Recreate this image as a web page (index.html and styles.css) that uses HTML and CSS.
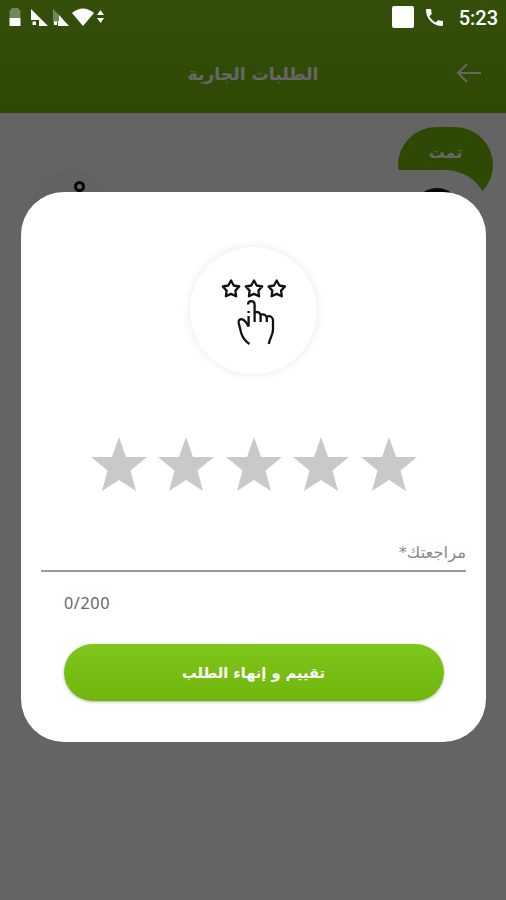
FILE: index.html
```
<!DOCTYPE html>
<html lang="ar" dir="rtl">
<head>
<meta charset="utf-8">
<title>الطلبات الجارية</title>
<meta name="viewport" content="width=device-width, initial-scale=1">
<link rel="stylesheet" href="styles.css">
</head>
<body>
<div class="screen">

	<header class="appbar">
		<svg class="back" width="26" height="22" viewBox="0 0 26 22"><path d="M25 11H2M11 2L2 11l9 9"/></svg>
		<h1>الطلبات الجارية</h1>
	</header>

	<main class="orders">
		<div class="tag">تمت</div>
		<div class="order">
			<span class="avatar"></span>
			<span class="pin"><i></i></span>
		</div>
	</main>

	<div class="overlay">
		<form class="modal" onsubmit="return false;">
			<div class="badge">
				<svg width="66" height="68" viewBox="0 0 66 68">
					<g class="ministars">
						<path id="mini" d="M10 2.5l2.7 5 5.5 1-3.8 4.1.7 5.700-5.100-2.400-5.100 2.400.7-5.700-3.800-4.100 5.500-1z"/>
						<use href="#mini" x="23"/>
						<use href="#mini" x="45.7"/>
					</g>
					<g class="hand">
						<path d="M27 26.500c.2-4.600 6.400-4.600 6.600 0V44"/>
						<path d="M27.600 33v2M27.600 38v10.500"/>
						<path d="M33.600 34.500c3.300-1.400 6 .5 6 3.500v6M39.600 36.700c3.400-1.200 6.200.5 6.200 3.800v3.500M45.800 38.500c3.600-1 6.200.7 6.200 4v9c0 5.500-3.300 8.500-4.200 14.500"/>
						<path d="M27.600 48.500c-1.400-3-3.200-6.500-6.400-7.200-2.600-.5-4 1.200-3.500 3.700l2.500 10c1.300 4.500 4 8 8.200 11"/>
					</g>
				</svg>
			</div>

			<div class="rating">
				<svg viewBox="0 0 56 54"><path d="M28 0l7 20h21L39.500 33.500 45 54 28 43 11 54l5.500-20.500L0 20h21z"/></svg>
				<svg viewBox="0 0 56 54"><path d="M28 0l7 20h21L39.500 33.500 45 54 28 43 11 54l5.500-20.500L0 20h21z"/></svg>
				<svg viewBox="0 0 56 54"><path d="M28 0l7 20h21L39.500 33.500 45 54 28 43 11 54l5.500-20.500L0 20h21z"/></svg>
				<svg viewBox="0 0 56 54"><path d="M28 0l7 20h21L39.500 33.500 45 54 28 43 11 54l5.500-20.500L0 20h21z"/></svg>
				<svg viewBox="0 0 56 54"><path d="M28 0l7 20h21L39.500 33.500 45 54 28 43 11 54l5.500-20.500L0 20h21z"/></svg>
			</div>

			<div class="review">مراجعتك*</div>
			<div class="counter" dir="ltr">0/200</div>
			<button class="submit">تقييم و إنهاء الطلب</button>
		</form>
	</div>

	<!-- system bar, stays bright above the overlay -->
	<div class="statusbar" dir="ltr">
		<svg width="110" height="34" viewBox="0 0 110 34">
			<path class="dim" d="M9.500 11q0-1.500 2-1.500V8h7v1.500q2 0 2 1.500v7h-11z"/>
			<path d="M9.500 18h11v8h-11z"/>
			<path d="M31 9l17 17h-9v-6h-8z"/>
			<path class="dim" d="M53 9l8 8v6h-8z"/>
			<path d="M59 15l10 11h-11v-5h1z"/>
			<path d="M32.500 21.500h3.500v3.500h-3.500zM54 21.500h3v3.500h-3z"/>
			<path d="M72 13q11-9 22 0L83 26z"/>
			<path d="M97 15l3.500-5 3.500 5zM97 18h7l-3.500 5z"/>
		</svg>
		<div class="right">
			<span class="square"></span>
			<svg width="17" height="17" viewBox="3 3 18 18"><path d="M6.620 10.790c1.440 2.830 3.760 5.140 6.590 6.590l2.200-2.200c.27-.27.670-.36 1.020-.24 1.120.37 2.330.57 3.570.57.550 0 1 .45 1 1V20c0 .55-.45 1-1 1C10.610 21 3 13.390 3 4c0-.55.450-1 1-1h3.500c.550 0 1 .45 1 1 0 1.250.2 2.450.57 3.570.11.350.030.740-.25 1.020z"/></svg>
			<span class="time">5:23</span>
		</div>
	</div>

</div>
</body>
</html>
```
FILE: styles.css
```
* { box-sizing: border-box; }
body {
	margin: 0;
	font-family: "DejaVu Sans", sans-serif;
	background: #fafafa;
}
svg { display: block; }

.screen {
	position: relative;
	height: 900px;
	overflow: hidden;
}

/* page behind the dialog */
.appbar {
	display: grid;
	grid-template-columns: 50px 1fr 50px;
	align-items: center;
	height: 113px;
	padding: 33px 0 0;
	background: linear-gradient(#80c61b, #72b60b);
}
.appbar h1 {
	margin: 2px 0 0;
	text-align: center;
	font-size: 17.2px;
	line-height: 30px;
	color: #fff;
}
.back {
	justify-self: end;
	fill: none;
	stroke: #fff;
	stroke-width: 2;
}
.orders { padding: 14px 13px 0 22px; }
.tag {
	width: 95px;
	height: 76px;
	padding-top: 13px;
	border-radius: 38px;
	background: #72b60b;
	color: #fff;
	text-align: center;
	font-size: 16px;
	font-weight: bold;
	line-height: 26px;
}
.order {
	position: relative;
	display: flex;
	justify-content: space-between;
	height: 200px;
	margin: -33px 4px 0 0;
	padding: 18px 27px 0 7px;
	border-radius: 44px;
	background: #fafafa;
}
.avatar {
	width: 50px;
	height: 50px;
	border-radius: 50%;
	background: #111;
}
.pin {
	width: 84px;
	height: 84px;
	margin-top: -18px;
	padding: 11px 28px 0 0;
	border-radius: 50%;
	background: #f5f5f5;
}
.pin i {
	display: block;
	width: 11px;
	height: 11px;
	border: 3.5px solid #111;
	border-radius: 50%;
}

/* dialog */
.overlay {
	position: absolute;
	inset: 0;
	padding: 192px 20px 0 21px;
	background: rgba(0, 0, 0, .6);
}
.modal {
	height: 550px;
	padding: 55px 20px 0;
	border-radius: 43px;
	background: #fff;
}
.badge {
	display: flex;
	justify-content: center;
	width: 127px;
	height: 127px;
	margin: 0 auto;
	padding-top: 31px;
	border-radius: 50%;
	box-shadow: 0 0 10px rgba(0, 0, 0, .09);
}
.badge svg {
	fill: none;
	stroke: #111;
	stroke-width: 2.3;
	stroke-linejoin: round;
}
.rating {
	display: flex;
	justify-content: center;
	gap: 11.5px;
	margin-top: 63px;
}
.rating svg {
	width: 56px;
	height: 54px;
	fill: #c9c9c9;
}
.review {
	height: 81px;
	padding-top: 50px;
	border-bottom: 2px solid #999;
	color: #8b8b8b;
	font-size: 16.4px;
	line-height: 24px;
}
.counter {
	padding: 19px 23px 0;
	color: #666;
	font: 16.2px/24px "Noto Sans", sans-serif;
	letter-spacing: .6px;
}
.submit {
	display: block;
	width: 380px;
	height: 57px;
	margin: 29px auto 0;
	padding: 0;
	border: 0;
	border-radius: 29px;
	background: linear-gradient(#7fc61b, #70b60c);
	box-shadow: 0 1px 3px rgba(0, 0, 0, .3);
	color: #fff;
	font: bold 14.6px "DejaVu Sans", sans-serif;
}

.statusbar {
	position: absolute;
	top: 0;
	left: 0;
	right: 0;
	display: flex;
	justify-content: space-between;
	height: 34px;
	padding-right: 8px;
}
.statusbar svg { fill: #fff; }
.statusbar .dim { fill: #71885a; }
.right {
	display: flex;
	align-items: center;
	gap: 12px;
}
.square {
	width: 22px;
	height: 22px;
	border-radius: 2px;
	background: #fff;
}
.time {
	margin: 2px 0 0 4px;
	color: #fff;
	font: 500 20px "Roboto", sans-serif;
}
```
